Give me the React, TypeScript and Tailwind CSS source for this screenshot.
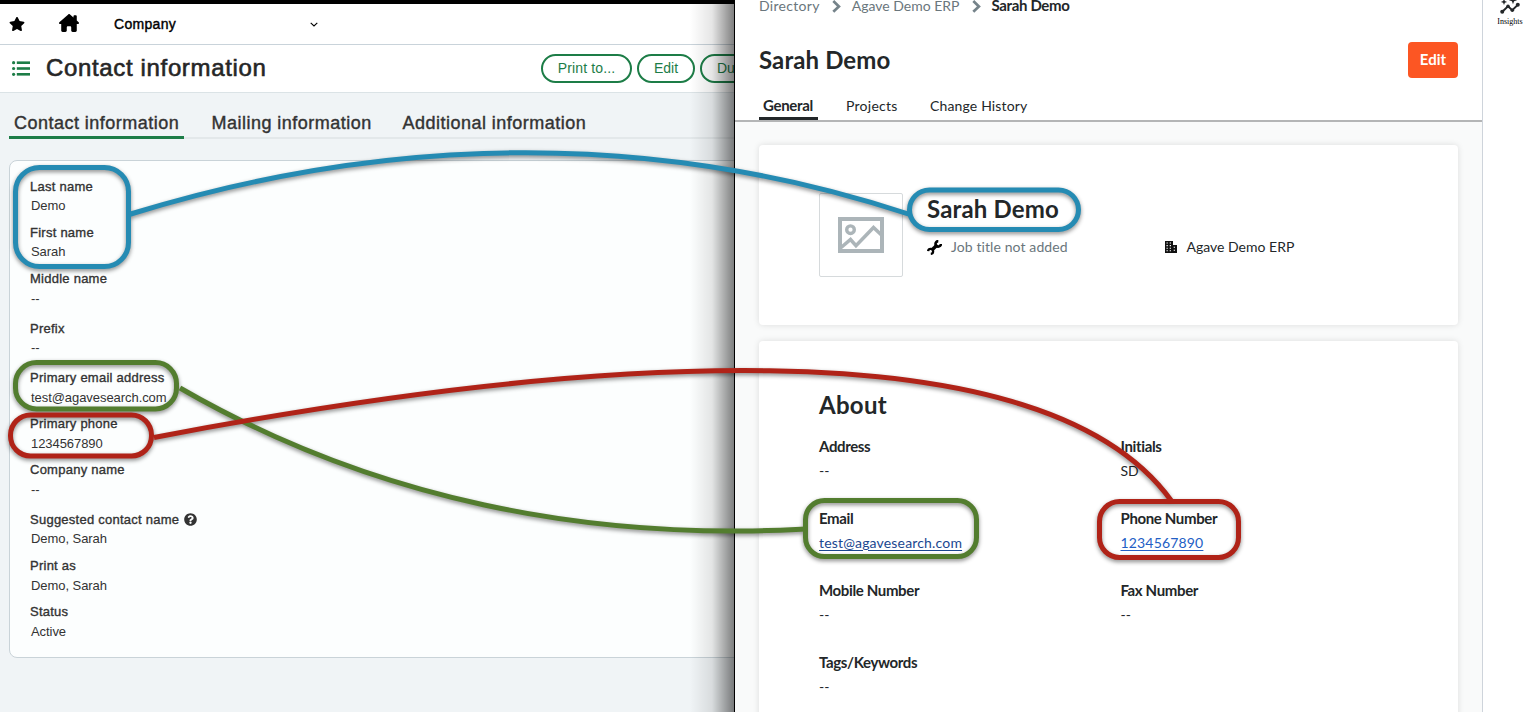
import React from "react";
import { FaStar, FaQuestionCircle } from "react-icons/fa";
import { FaHouseChimney } from "react-icons/fa6";

const leftFields: { label: string; value: string; row: string; lead: string; help?: boolean }[] = [
  { label: "Last name", value: "Demo", row: "h-[46px]", lead: "leading-[17px]" },
  { label: "First name", value: "Sarah", row: "h-[46px]", lead: "leading-[17px]" },
  { label: "Middle name", value: "--", row: "h-[50px]", lead: "leading-[19px]" },
  { label: "Prefix", value: "--", row: "h-[49px]", lead: "leading-[17px]" },
  { label: "Primary email address", value: "test@agavesearch.com", row: "h-[46px]", lead: "leading-[19px]" },
  { label: "Primary phone", value: "1234567890", row: "h-[46px]", lead: "leading-[19px]" },
  { label: "Company name", value: "--", row: "h-[50px]", lead: "leading-[19px]" },
  { label: "Suggested contact name", value: "Demo, Sarah", row: "h-[46px]", lead: "leading-[17px]", help: true },
  { label: "Print as", value: "Demo, Sarah", row: "h-[46px]", lead: "leading-[19px]" },
  { label: "Status", value: "Active", row: "h-[46px]", lead: "leading-[19px]" },
];

const aboutFields: { label: string; value: string; link?: string }[] = [
  { label: "Address", value: "--" },
  { label: "Initials", value: "SD" },
  { label: "Email", value: "test@agavesearch.com", link: "text-[#1b478f]" },
  { label: "Phone Number", value: "1234567890", link: "text-[#2360c5]" },
  { label: "Mobile Number", value: "--" },
  { label: "Fax Number", value: "--" },
  { label: "Tags/Keywords", value: "--" },
];

function ContactList() {
  return (
    <section className="relative flex h-full w-[734px] shrink-0 flex-col overflow-hidden bg-[#f0f4f6] font-['Liberation_Sans',Arial,sans-serif] text-[#333]">
      <div className="h-1 shrink-0 bg-black" />
      <header className="flex h-[41px] shrink-0 items-center border-b border-[#c9d3da] bg-white pl-[9px] text-black">
        <FaStar className="size-[16px]" />
        <FaHouseChimney className="ml-[34px] h-[18px] w-[20px] -translate-y-px" />
        <span className="ml-[35px] w-[196px] text-sm leading-5 tracking-[0.3px] [-webkit-text-stroke:0.4px_currentColor]">
          Company
        </span>
        <svg viewBox="0 0 8 5" className="h-[5px] w-2 fill-none stroke-current">
          <path d="M.7.8 4 4 7.3.8" strokeWidth="1.1" />
        </svg>
      </header>
      <div className="flex h-12 shrink-0 items-center border-b border-[#dbe3e6] bg-white pl-3 text-[#1d7d47]">
        <svg viewBox="0 0 18 15" className="h-[15px] w-[18px] shrink-0 fill-current">
          {[1.7, 7.5, 13.3].map((y) => (
            <g key={y}>
              <circle cx="1.6" cy={y} r="1.6" />
              <rect x="4.8" y={y - 1.3} width="13.2" height="2.6" />
            </g>
          ))}
        </svg>
        <h1 className="-mt-0.5 ml-4 w-[495px] shrink-0 whitespace-nowrap text-2xl tracking-[0.65px] text-[#262626] [-webkit-text-stroke:0.6px_currentColor]">
          Contact information
        </h1>
        <div className="flex shrink-0 gap-[5px] text-sm">
          <button className="h-[29px] w-[91px] rounded-full border-2 border-current pb-0.5 tracking-[0.15px]">Print to...</button>
          <button className="h-[29px] w-[58px] rounded-full border-2 border-current pb-0.5">Edit</button>
          <button className="h-[29px] w-[94px] rounded-full border-2 border-current pb-0.5 pl-[15px] text-left">Du</button>
        </div>
      </div>
      <nav className="ml-[9px] mt-[12px] flex h-[34px] shrink-0 border-b-2 border-[#e3e8ea] text-lg leading-9 tracking-[0.48px] [-webkit-text-stroke:0.4px_currentColor]">
        <span className="h-[34px] w-[175px] whitespace-nowrap border-b-[3px] border-[#1d7d47] pl-[5px]">Contact information</span>
        <span className="ml-[27.5px] w-[191px] whitespace-nowrap">Mailing information</span>
        <span className="whitespace-nowrap">Additional information</span>
      </nav>
      <div className="ml-[9px] mt-[21px] h-[498px] w-[760px] shrink-0 rounded-lg border border-[#c9d3d8] bg-[#fcfefe] pl-[20px] pt-[16px] text-[13px]">
        {leftFields.map((f) => (
          <div key={f.label} className={f.row}>
            <div className="flex h-5 items-center gap-[5px] leading-5 tracking-[0.25px] [-webkit-text-stroke:0.35px_currentColor]">
              {f.label}
              {f.help && <FaQuestionCircle className="-mt-0.5 size-[13px]" />}
            </div>
            <div className={`pl-px tracking-[-0.06px] ${f.lead}`}>{f.value}</div>
          </div>
        ))}
      </div>
      <div className="absolute inset-y-0 right-0 w-11 bg-linear-to-r from-black/0 via-black/10 to-black/50" />
    </section>
  );
}

function Chevron() {
  return (
    <svg viewBox="0 0 9 13" className="ml-3 mr-[11px] h-[13px] w-[9px] shrink-0 fill-none stroke-[#75838a]">
      <path d="M1.3 1.1 6.9 6.4 1.3 11.8" strokeWidth="2.7" />
    </svg>
  );
}

function Wrench() {
  return (
    <svg viewBox="0 0 15 15" className="size-[15px] shrink-0 fill-none stroke-black">
      <path d="M4.7 10.3 10.3 4.7" strokeWidth="3.4" />
      <path d="M11.3 1.2A2.7 2.7 0 1 0 13.9 3.9" strokeWidth="2.6" />
      <path d="M1.1 11.2A2.5 2.5 0 1 1 3.8 13.9" strokeWidth="2.3" />
    </svg>
  );
}

function Building() {
  return (
    <svg viewBox="0 0 12 12" className="size-3 shrink-0">
      <path d="M0 0H8V4H12V12H0Z" className="fill-[#111]" />
      <path
        d="M1.5 2h1.3M4.7 2H6M1.5 4.6h1.3M4.7 4.6H6M1.5 7.2h1.3M4.7 7.2H6M1.5 9.8h1.3M4.7 9.8H6M8.7 6.3H10M8.7 9.2H10"
        className="stroke-white"
        strokeWidth="1.1"
      />
    </svg>
  );
}

function InsightsIcon() {
  return (
    <svg viewBox="0 0 20 18" className="-mt-1 h-[18px] w-5 shrink-0 fill-current">
      <path d="M2 16 8 10.3 12.3 14.2 18 8.6" className="fill-none stroke-current" strokeWidth="2" />
      <circle cx="2.2" cy="15.8" r="2" />
      <circle cx="8" cy="10.300" r="1.8" />
      <circle cx="12.300" cy="14.200" r="1.8" />
      <circle cx="17.800" cy="8.800" r="2" />
      <path d="M4 2.800 4.900 5 7.100 5.900 4.900 6.800 4 9 3.100 6.800.9 5.900 3.100 5ZM13 .2l1.100 2.900 2.900 1.100-2.900 1.100L13 8.200l-1.100-2.900L9 4.200l2.900-1.100Z" />
    </svg>
  );
}

function DirectoryEntry() {
  return (
    <section className="flex h-full w-[748px] shrink-0 flex-col overflow-hidden border-l border-black bg-[#f9fafa] font-[Lato,sans-serif] text-sm text-[#232729]">
      <header className="flex h-[122px] shrink-0 flex-col border-b-2 border-[#b4b5b6] bg-white pl-6">
        <div className="-mt-1 flex h-5 shrink-0 items-center whitespace-nowrap text-[#6a767c]">
          <span className="tracking-[0.3px]">Directory</span>
          <Chevron />
          <span>Agave Demo ERP</span>
          <Chevron />
          <span className="text-[15px] font-bold tracking-[-0.35px] text-[#232729]">Sarah Demo</span>
        </div>
        <div className="mt-[26px] flex h-9 shrink-0 items-center justify-between pr-6">
          <h2 className="text-2xl font-bold tracking-[0.1px]">Sarah Demo</h2>
          <button className="h-9 w-[50px] rounded bg-[#fc5623] text-[15px] font-bold text-white">Edit</button>
        </div>
        <nav className="mt-[16px] flex h-[26px] shrink-0 leading-6">
          <span className="h-[26px] w-[59px] border-b-[3px] border-[#232729] pl-1 text-[15px] font-bold leading-[22px] tracking-[-0.3px]">General</span>
          <span className="ml-7 w-[84px] tracking-[0.25px]">Projects</span>
          <span className="tracking-[0.15px]">Change History</span>
        </nav>
      </header>
      <div className="ml-6 mt-[23px] flex h-[180px] w-[699px] shrink-0 rounded bg-white pl-[60px] pt-12 shadow-[0_0_6px_rgba(0,0,0,0.12)]">
        <div className="flex size-[84px] items-center justify-center rounded-xs border border-[#d6dadc]">
          <svg viewBox="0 0 46 36" className="h-9 w-[46px] fill-none stroke-[#acb5b9]">
            <rect x="2" y="2" width="42" height="32" strokeWidth="4" />
            <circle cx="12.5" cy="12.7" r="3.8" strokeWidth="3.4" />
            <path d="M2.5 31 12.5 22.5 18 28.7 35.5 10.5 44 18.5" strokeWidth="3.6" />
          </svg>
        </div>
        <div className="ml-6">
          <h2 className="text-2xl font-bold leading-8 tracking-[0.15px]">Sarah Demo</h2>
          <div className="mt-3 flex h-5 items-center whitespace-nowrap">
            <Wrench />
            <span className="ml-[9px] w-[214px] tracking-[0.1px] text-[#6a767c]">Job title not added</span>
            <Building />
            <span className="ml-[9.5px]">Agave Demo ERP</span>
          </div>
        </div>
      </div>
      <div className="ml-6 mt-4 h-[400px] w-[699px] shrink-0 rounded bg-white pl-[60px] pt-[48px] shadow-[0_0_6px_rgba(0,0,0,0.12)]">
        <h2 className="h-[47px] text-2xl font-bold leading-8 tracking-[0.3px]">About</h2>
        <div className="grid grid-cols-[301.5px_301px]">
          {aboutFields.map((f) => (
            <div key={f.label} className="h-[72px]">
              <div className="h-[23px] text-[15px] font-bold leading-5 tracking-[-0.36px]">{f.label}</div>
              <div className="leading-6">
                {f.link ? (
                  <a className={`tracking-[0.17px] underline underline-offset-2 ${f.link}`}>{f.value}</a>
                ) : (
                  f.value
                )}
              </div>
            </div>
          ))}
        </div>
      </div>
    </section>
  );
}

const shapes = [
  { color: "#258bb3", box: [15.5, 167.5, 113, 99, 24], line: "M129 214.5 C396 132 660 132 910 214.5" },
  { color: "#258bb3", box: [909.5, 190, 169, 39.5, 20], line: "" },
  { color: "#537d2f", box: [15.5, 362.5, 161, 46.5, 21], line: "M180 388 C374 500 589 541 806 529" },
  { color: "#537d2f", box: [805.5, 500.5, 171, 56, 19], line: "" },
  { color: "#b02318", box: [10.5, 415, 141, 41, 20], line: "M154 437.5 C570 358 1040 318 1171.5 501" },
  { color: "#b02318", box: [1099.5, 501.5, 139, 56, 20], line: "" },
];

function Connectors() {
  return (
    <svg
      viewBox="0 0 1524 712"
      className="pointer-events-none absolute inset-0 h-[712px] w-[1524px] fill-none drop-shadow-[0_2px_2px_rgba(0,0,0,0.45)]"
    >
      {shapes.map((s, i) => (
        <g key={i} stroke={s.color} strokeWidth="5">
          <rect x={s.box[0]} y={s.box[1]} width={s.box[2]} height={s.box[3]} rx={s.box[4]} />
          {s.line && <path d={s.line} />}
        </g>
      ))}
    </svg>
  );
}

export default function App() {
  return (
    <main className="relative flex h-[712px] w-[1524px] overflow-hidden bg-white">
      <ContactList />
      <DirectoryEntry />
      <aside className="flex flex-1 flex-col items-center border-l border-[#ced4db] pl-[13px] text-[#232729]">
        <InsightsIcon />
        <span className="mt-1 font-['Liberation_Serif',serif] text-[8px] leading-2 text-black">Insights</span>
      </aside>
      <Connectors />
    </main>
  );
}
